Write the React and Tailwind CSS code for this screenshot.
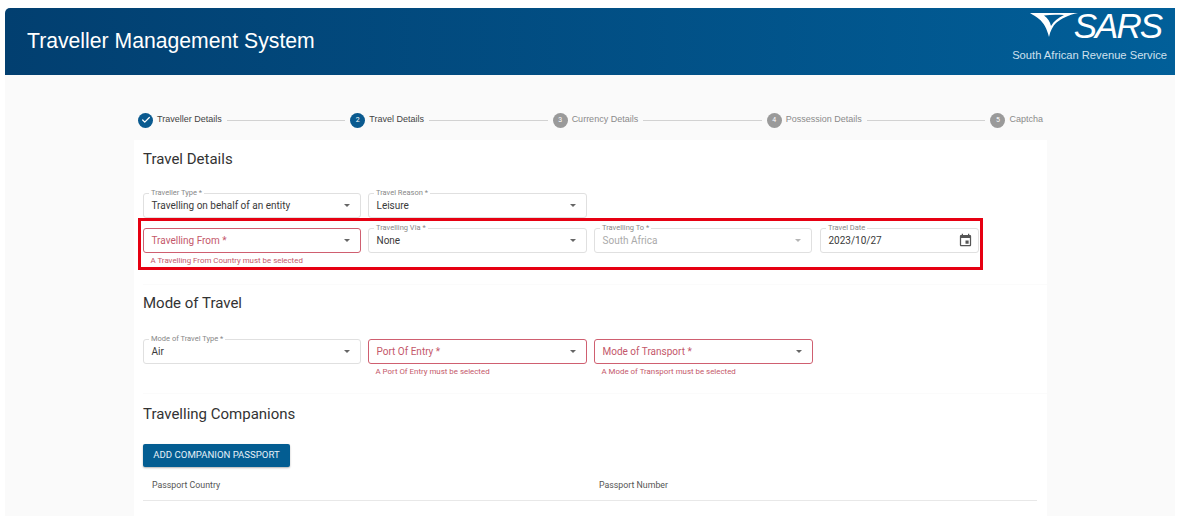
import { Fragment } from "react";
import { Check } from "lucide-react";

const steps = [
  { id: 1, label: "Traveller Details", done: true, active: true },
  { id: 2, label: "Travel Details", active: true },
  { id: 3, label: "Currency Details" },
  { id: 4, label: "Possession Details" },
  { id: 5, label: "Captcha" },
];

const Arrow = ({ disabled }) => (
  <span className={`h-0 w-0 border-x-[3.5px] border-t-[3.5px] border-x-transparent ${disabled ? "border-t-[#b5b5b5]" : "border-t-[#666]"}`} />
);

const EventIcon = () => (
  <svg width="15" height="15" viewBox="0 0 24 24" fill="#555">
    <path d="M17 12h-5v5h5v-5zM16 1v2H8V1H6v2H5c-1.11 0-1.99.9-1.99 2L3 19c0 1.1.89 2 2 2h14c1.1 0 2-.9 2-2V5c0-1.1-.9-2-2-2h-1V1h-2zm3 18H5V8h14v11z" />
  </svg>
);

const Field = ({ label, value, error, width, disabled, date }) => {
  const border = error ? "border-[#cf5f70]" : "border-[#e0e0e0]";
  return (
    <div className={width}>
      <div className={`relative flex h-[25px] items-center justify-between rounded-[3px] border bg-white pl-[7.5px] ${border} ${date ? "pr-[5px]" : "pr-[10px]"}`}>
        {label && (
          <span className="absolute left-[5px] top-[-5px] bg-white px-[2px] text-[7.5px] leading-[8px] text-[#888]">{label}</span>
        )}
        {error ? (
          <span className="text-[10px] leading-none text-[#c4586a]">{value}</span>
        ) : (
          <span className={`text-[10px] leading-none ${disabled ? "text-[#aaa]" : "text-[#3a3a3a]"}`}>{value}</span>
        )}
        {date ? <EventIcon /> : <Arrow disabled={disabled} />}
      </div>
      {error && <p className="mt-[3px] pl-[7.5px] text-[7.9px] leading-[9px] text-[#c4586a]">{error}</p>}
    </div>
  );
};

const SarsLogo = () => (
  <div className="flex items-start">
    <svg width="48" height="26" viewBox="0 0 48 26">
      <path d="M0 1 L48 1 C38 3 31 7 26 11 C23 14 20 19 19 25 C17 17 14 11 9 7 C6 4.5 3 3 0 1 Z M14 3.5 C18 6 20 10 21 14 C24 9 28 6 34 3 C27 2.5 20 2.5 14 3.5 Z" fill="#fff" fillRule="evenodd" />
    </svg>
    <span className="ml-[-4px] text-[35px] italic leading-[27px] tracking-[-2px] text-white font-['Liberation_Sans',sans-serif]">SARS</span>
  </div>
);

const App = () => {
  return (
    <div className="h-[516px] w-[1182px] overflow-hidden bg-white pl-[5px] pr-[7px] pt-[8px] font-['Roboto',sans-serif]">
      <header className="flex h-[67px] items-start justify-between rounded-tl-[5px] bg-gradient-to-r from-[#023f70] to-[#015f99] pl-[22px] pr-[8px]">
        <h1 className="mt-[20px] text-[21.2px] leading-[26px] text-white font-['Liberation_Sans',sans-serif]">Traveller Management System</h1>
        <div className="flex flex-col items-end pt-[4px]">
          <div className="pr-[6px]"><SarsLogo /></div>
          <p className="mt-[10px] text-[11.2px] leading-[13px] text-[#cfe0ee] font-['Liberation_Sans',sans-serif]">South African Revenue Service</p>
        </div>
      </header>

      <main className="h-[441px] bg-[#fafafa] pl-[129px] pr-[128px]">
        <div className="flex h-[65px] items-center pl-[4px] pr-[4px] pt-[30px] pb-[5px]">
          {steps.map((step, i) => (
            <Fragment key={step.id}>
              <span className={`flex h-[15px] w-[15px] shrink-0 items-center justify-center rounded-full text-[7px] text-white ${step.active ? "bg-[#0a5a8f]" : "bg-[#9a9a9a]"}`}>
                {step.done ? <Check size={10} strokeWidth={3} /> : step.id}
              </span>
              <span className={`ml-[4px] whitespace-nowrap text-[9px] font-['Liberation_Sans',sans-serif] ${step.active ? "text-[#444]" : "text-[#8a8a8a]"}`}>{step.label}</span>
              {i < steps.length - 1 && <span className="mx-[5px] h-px flex-1 bg-[#d2d2d2]" />}
            </Fragment>
          ))}
        </div>

        <div className="h-[376px] overflow-hidden bg-white pl-[9px]">
          <section className="h-[144px] pt-[11px]">
            <h2 className="text-[15px] leading-[17px] text-[#333]">Travel Details</h2>
            <div className="mt-[25px] flex gap-[7px]">
              <Field label="Traveller Type *" value="Travelling on behalf of an entity" width="w-[218px]" />
              <Field label="Travel Reason *" value="Leisure" width="w-[219px]" />
            </div>
            <div className="relative mt-[10px] flex gap-[7px]">
              <Field value="Travelling From *" error="A Travelling From Country must be selected" width="w-[218px]" />
              <Field label="Travelling Via *" value="None" width="w-[219px]" />
              <Field label="Travelling To *" value="South Africa" width="w-[218px]" disabled />
              <Field label="Travel Date" value="2023/10/27" width="ml-[1px] w-[159px]" date />
              <div className="pointer-events-none absolute left-[-5px] top-[-10px] h-[52px] w-[845px] border-[3px] border-[#e60012]" />
            </div>
          </section>

          <section className="h-[109px] border-t border-[#fbfbfb] pt-[10px]">
            <h2 className="text-[15px] leading-[17px] text-[#333]">Mode of Travel</h2>
            <div className="mt-[27px] flex gap-[7px]">
              <Field label="Mode of Travel Type *" value="Air" width="w-[218px]" />
              <Field value="Port Of Entry *" error="A Port Of Entry must be selected" width="w-[219px]" />
              <Field value="Mode of Transport *" error="A Mode of Transport must be selected" width="w-[219px]" />
            </div>
          </section>

          <section className="border-t border-[#fbfbfb] pt-[12px]">
            <h2 className="text-[15px] leading-[17px] text-[#333]">Travelling Companions</h2>
            <button className="mt-[21px] block h-[23px] w-[147px] rounded-[2px] bg-[#035d92] text-[9.6px] text-[#e6f1f8] shadow-[0_1px_2px_rgba(0,0,0,0.3)]">ADD COMPANION PASSPORT</button>
            <div className="mr-[10px] mt-[5px] flex h-[29px] items-center border-b border-[#e8e8e8] pl-[9px] text-[8.8px] text-[#555]">
              <span className="w-[447px]">Passport Country</span>
              <span>Passport Number</span>
            </div>
          </section>
        </div>
      </main>
    </div>
  );
};

export default App;
